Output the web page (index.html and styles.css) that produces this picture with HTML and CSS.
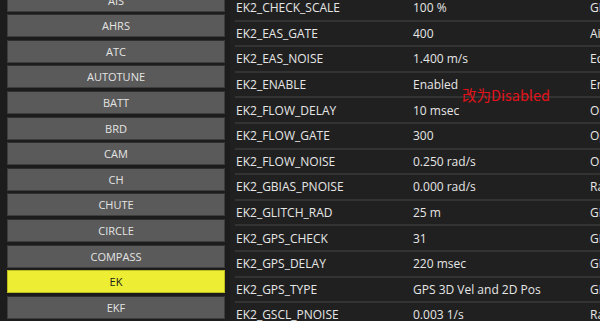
FILE: index.html
```html
<!DOCTYPE html>
<html>
<head>
    <meta charset="UTF-8">
    <title>参数列表</title>
    <link rel="stylesheet" href="styles.css">
</head>
<body>
<div class="page">
    <div class="groups">
        <div class="group">AIS</div>
        <div class="group">AHRS</div>
        <div class="group">ATC</div>
        <div class="group">AUTOTUNE</div>
        <div class="group">BATT</div>
        <div class="group">BRD</div>
        <div class="group">CAM</div>
        <div class="group">CH</div>
        <div class="group">CHUTE</div>
        <div class="group">CIRCLE</div>
        <div class="group">COMPASS</div>
        <div class="group on">EK</div>
        <div class="group">EKF</div>
    </div>
    <div class="params">
        <div class="row"><span class="name">EK2_CHECK_SCALE</span><span class="val">100 %</span><span class="desc">GPS accuracy check scaler</span></div>
        <div class="row"><span class="name">EK2_EAS_GATE</span><span class="val">400</span><span class="desc">Airspeed measurement gate size</span></div>
        <div class="row"><span class="name">EK2_EAS_NOISE</span><span class="val">1.400 m/s</span><span class="desc">Equivalent airspeed noise</span></div>
        <div class="row"><span class="name">EK2_ENABLE</span><span class="val">Enabled</span><span class="desc">Enable EKF2</span></div>
        <div class="row"><span class="name">EK2_FLOW_DELAY</span><span class="val">10 msec</span><span class="desc">Optical Flow delay</span></div>
        <div class="row"><span class="name">EK2_FLOW_GATE</span><span class="val">300</span><span class="desc">Optical Flow gate size</span></div>
        <div class="row"><span class="name">EK2_FLOW_NOISE</span><span class="val">0.250 rad/s</span><span class="desc">Optical flow noise</span></div>
        <div class="row"><span class="name">EK2_GBIAS_PNOISE</span><span class="val">0.000 rad/s</span><span class="desc">Rate gyro bias stability</span></div>
        <div class="row"><span class="name">EK2_GLITCH_RAD</span><span class="val">25 m</span><span class="desc">GPS glitch radius</span></div>
        <div class="row"><span class="name">EK2_GPS_CHECK</span><span class="val">31</span><span class="desc">GPS preflight check</span></div>
        <div class="row"><span class="name">EK2_GPS_DELAY</span><span class="val">220 msec</span><span class="desc">GPS measurement delay</span></div>
        <div class="row"><span class="name">EK2_GPS_TYPE</span><span class="val">GPS 3D Vel and 2D Pos</span><span class="desc">GPS mode control</span></div>
        <div class="row"><span class="name">EK2_GSCL_PNOISE</span><span class="val">0.003 1/s</span><span class="desc">Rate gyro scale stability</span></div>
    </div>
    <div class="note">改为Disabled</div>
</div>
</body>
</html>
```
FILE: styles.css
```css
* {
    margin: 0;
    padding: 0;
    box-sizing: border-box;
}
body {
    background: #1f1f1f;
    font-family: "Open Sans", "Noto Sans", sans-serif;
    color: #e6e6e6;
    overflow: hidden;
}
.page {
    position: relative;
    display: flex;
    width: 600px;
    height: 321px;
    overflow: hidden;
}
.groups {
    width: 230px;
    padding-left: 7px;
    padding-right: 5px;
    margin-top: -11.4px;
    display: flex;
    flex-direction: column;
    gap: 2.6px;
    background: #1c1c1c;
}
.group {
    height: 23px;
    line-height: 21px;
    text-align: center;
    font-size: 11px;
    background: #5a5a5a;
    border: 1px solid #3e3e3e;
    border-top-color: #2e2e2e;
    color: #e4e4e4;
}
.group.on {
    background: #eded33;
    color: #1a1a1a;
    border-color: #bdbd20;
}
.params {
    flex: 1;
    margin-top: -4px;
    padding-left: 5px;
    background: #202020;
}
.row {
    display: grid;
    grid-template-columns: 178px 177px 1fr;
    height: 25.6px;
    align-items: center;
    font-size: 12px;
    border-bottom: 2px solid #333;
    white-space: nowrap;
    overflow: hidden;
}
.name {
    padding-left: 1px;
}
.desc {
    overflow: hidden;
}
.note {
    position: absolute;
    left: 462px;
    top: 84px;
    font-size: 14.5px;
    color: #e3121a;
    font-family: "Noto Sans CJK SC", "Noto Sans", sans-serif;
}
```
